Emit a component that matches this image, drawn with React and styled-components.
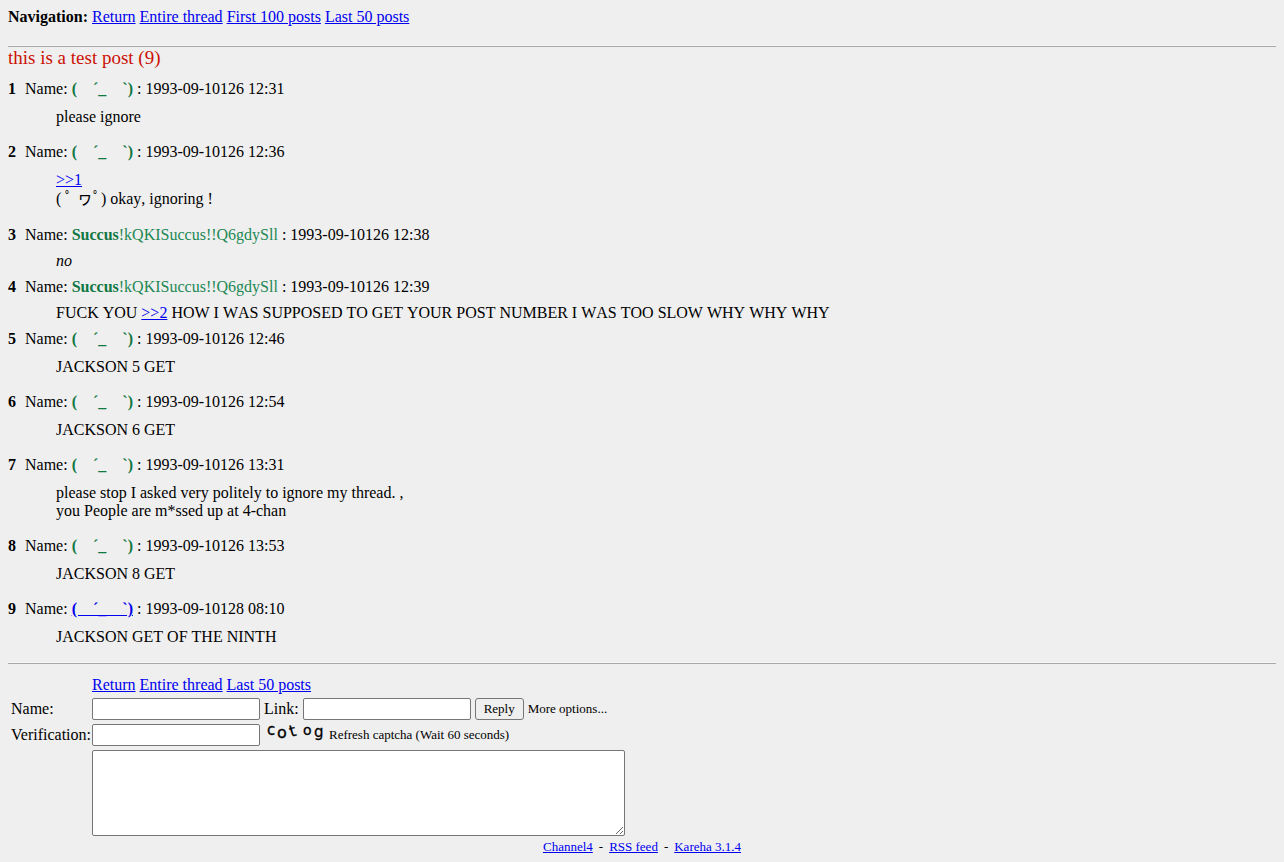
import React from 'react'
import styled, { createGlobalStyle } from 'styled-components'

const GlobalStyle = createGlobalStyle`
    body {
        margin: 8px;
        background-color: #efefef;
        color: #000;
        font-family: "Liberation Serif", "Noto Sans CJK JP", serif;
        font-size: 16px;
        line-height: 18px;
    }

    a {
        color: #0000ee;
    }
`

const Navigation = styled.nav`
    margin-bottom: 19px;
`

const Divider = styled.hr`
    height: 0;
    margin: 0;
    border-style: solid none;
    border-width: 1px;
    border-top-color: #f6f6f6;
    border-bottom-color: #a8a8a8;
`

const ThreadTitle = styled.h1`
    margin: 0 0 10px;
    color: #cc1105;
    font-size: 19px;
    font-weight: normal;
    line-height: 22px;
`

const PostHeader = styled.h2`
    margin: 0;
    padding-top: 1px;
    font-size: 16px;
    font-weight: normal;
`

const PostNumber = styled.b`
    margin-right: 9px;
`

const PosterName = styled.b`
    color: #117743;
`

const Trip = styled.span`
    color: #228854;
`

const PostBody = styled.div`
    margin: ${props => props.$compact ? '8px 48px 7px' : '10px 48px 16px'};
    font-kerning: none;
`

const Kaomoji = styled.span`
    line-height: 20px;
`

const PostForm = styled.form`
    margin-top: 9px;
`

const FormTable = styled.table`
    border-spacing: 1px 2px;

    td, th {
        padding: 1px 0;
        font-weight: normal;
        text-align: left;
        vertical-align: middle;
    }

    th {
        padding-left: 2px;
    }
`

const TextInput = styled.input`
    box-sizing: border-box;
    width: 168px;
    height: 22px;
    margin: 0;
    padding: 1px 2px;
    border: 1px solid #767676;
    border-radius: 2px;
    background-color: #fff;
    font: inherit;
    font-size: 13px;
    vertical-align: middle;
`

const ReplyButton = styled.button`
    box-sizing: border-box;
    height: 22px;
    margin: 0;
    padding: 0 8px;
    border: 1px solid #767676;
    border-radius: 3px;
    background-color: #efefef;
    color: #000;
    font: inherit;
    font-size: 13px;
    vertical-align: middle;
`

const CommentBox = styled.textarea`
    box-sizing: border-box;
    display: block;
    width: 533px;
    height: 86px;
    margin: 0;
    padding: 2px;
    border: 1px solid #767676;
    border-radius: 2px;
    background-color: #fff;
    font: inherit;
`

const FieldRow = styled.div`
    display: flex;
    align-items: center;
    gap: 4px;
`

const SmallText = styled.span`
    font-size: 13px;
`

const CaptchaImage = styled.svg`
    display: block;
    width: 61px;
    height: 18px;
    overflow: visible;
    font-family: "DejaVu Sans", sans-serif;
    stroke: #000;
    stroke-width: 0.3;
`

const Footer = styled.footer`
    font-size: 13px;
    line-height: 15px;
    text-align: center;
`

const Dash = styled.span`
    margin: 0 6px;
`

const ANON = '(\u3000´_\u3000`)'

const posts = [
    { time: '1993-09-10126 12:31', body: 'please ignore' },
    { time: '1993-09-10126 12:36', body: <><a href="#post1">&gt;&gt;1</a><br /><Kaomoji>( ﾟ ヮﾟ)</Kaomoji> okay, ignoring !</> },
    { time: '1993-09-10126 12:38', name: 'Succus', trip: '!kQKISuccus!!Q6gdySll', compact: true, body: <i>no</i> },
    {
        time: '1993-09-10126 12:39',
        name: 'Succus',
        trip: '!kQKISuccus!!Q6gdySll',
        compact: true,
        body: <>FUCK YOU <a href="#post2">&gt;&gt;2</a> HOW I WAS SUPPOSED TO GET YOUR POST NUMBER I WAS TOO SLOW WHY WHY WHY</>
    },
    { time: '1993-09-10126 12:46', body: 'JACKSON 5 GET' },
    { time: '1993-09-10126 12:54', body: 'JACKSON 6 GET' },
    { time: '1993-09-10126 13:31', body: <>please stop I asked very politely to ignore my thread. ,<br />you People are m*ssed up at 4-chan</> },
    { time: '1993-09-10126 13:53', body: 'JACKSON 8 GET' },
    { time: '1993-09-10128 08:10', link: true, body: 'JACKSON GET OF THE NINTH' },
]

const Post = ({ number, name = ANON, trip, time, link, compact, body }) => (
    <article id={`post${number}`}>
        <PostHeader>
            <PostNumber>{number}</PostNumber>
            Name: {link ? <a href="#mail"><b>{name}</b></a> : <PosterName>{name}</PosterName>}
            {trip && <Trip>{trip}</Trip>} : {time}
        </PostHeader>
        <PostBody $compact={compact}>{body}</PostBody>
    </article>
)

const Captcha = () => (
    <CaptchaImage viewBox="0 0 61 18" role="img" aria-label="Captcha">
        <text x="3" y="9" fontSize="15">c</text>
        <text x="13" y="12" fontSize="16">o</text>
        <text x="27" y="11" fontSize="16" rotate="-16">t</text>
        <text x="39" y="9" fontSize="14">o</text>
        <text x="50" y="11" fontSize="15">g</text>
    </CaptchaImage>
)

const ReplyForm = () => (
    <PostForm onSubmit={e => e.preventDefault()}>
        <FormTable>
            <tbody>
                <tr>
                    <td></td>
                    <td>
                        <a href="#return">Return</a> <a href="#thread">Entire thread</a> <a href="#last">Last 50 posts</a>
                    </td>
                </tr>
                <tr>
                    <th><label htmlFor="name">Name:</label></th>
                    <td>
                        <FieldRow>
                            <TextInput id="name" type="text" />
                            <label htmlFor="link">Link:</label>
                            <TextInput id="link" type="text" />
                            <ReplyButton type="submit">Reply</ReplyButton>
                            <SmallText>More options...</SmallText>
                        </FieldRow>
                    </td>
                </tr>
                <tr>
                    <th><label htmlFor="captcha">Verification:</label></th>
                    <td>
                        <FieldRow>
                            <TextInput id="captcha" type="text" />
                            <Captcha />
                            <SmallText>Refresh captcha (Wait 60 seconds)</SmallText>
                        </FieldRow>
                    </td>
                </tr>
                <tr>
                    <td></td>
                    <td><CommentBox aria-label="Comment" /></td>
                </tr>
            </tbody>
        </FormTable>
    </PostForm>
)

export default function App() {
    return (
        <>
            <GlobalStyle />
            <Navigation>
                <b>Navigation:</b> <a href="#return">Return</a> <a href="#thread">Entire thread</a> <a href="#first">First 100 posts</a> <a href="#last">Last 50 posts</a>
            </Navigation>
            <Divider />
            <main>
                <ThreadTitle>this is a test post (9)</ThreadTitle>
                {posts.map((post, i) => <Post key={i} number={i + 1} {...post} />)}
            </main>
            <Divider />
            <ReplyForm />
            <Footer>
                <a href="#home">Channel4</a><Dash>-</Dash><a href="#rss">RSS feed</a><Dash>-</Dash><a href="#kareha">Kareha 3.1.4</a>
            </Footer>
        </>
    )
}
